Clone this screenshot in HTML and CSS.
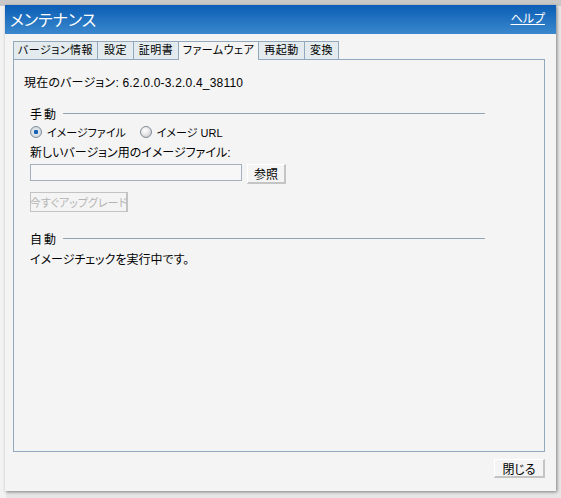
FILE: index.html
```html
<!DOCTYPE html>
<html lang="ja">
<head>
<meta charset="utf-8">
<title>メンテナンス</title>
<link rel="stylesheet" href="styles.css">
</head>
<body>
<div class="page">
  <div class="page-top"></div>
  <div class="page-main"></div>
</div>
<div class="dialog">
  <div class="titlebar">
    <span class="title">メンテナンス</span>
    <a class="help" href="#">ヘルプ</a>
  </div>
  <div class="dialog-body">
    <div class="tabs">
      <div class="tab t1">バージョン情報</div>
      <div class="tab t2">設定</div>
      <div class="tab t3">証明書</div>
      <div class="tab t4 active">ファームウェア</div>
      <div class="tab t5">再起動</div>
      <div class="tab t6">変換</div>
    </div>
    <div class="panel">
      <div class="version">現在のバージョン: 6.2.0.0-3.2.0.4_38110</div>
      <div class="section">
        <div class="section-head"><span class="section-title">手動</span><span class="rule"></span></div>
        <div class="radios">
          <label class="radio-item"><span class="radio checked"></span>イメージファイル</label>
          <label class="radio-item second"><span class="radio"></span>イメージ URL</label>
        </div>
        <div class="field-label">新しいバージョン用のイメージファイル:</div>
        <div class="file-row">
          <span class="file-input"></span>
          <span class="btn browse">参照</span>
        </div>
        <span class="btn disabled">今すぐアップグレード</span>
        <div class="section-head auto"><span class="section-title">自動</span><span class="rule"></span></div>
        <div class="message">イメージチェックを実行中です。</div>
      </div>
    </div>
    <div class="footer">
      <span class="btn close">閉じる</span>
    </div>
  </div>
</div>
</body>
</html>
```

FILE: styles.css
```css
html, body {
  margin: 0;
  padding: 0;
}
body {
  width: 561px;
  height: 498px;
  overflow: hidden;
  background: #d8d8d8;
  font-family: "Liberation Sans", "Noto Sans CJK JP", sans-serif;
  font-size: 12px;
  color: #000;
  font-feature-settings: "palt";
}
.page {
  display: flex;
  flex-direction: column;
  height: 498px;
}
.page-top {
  height: 6px;
  background: #c8c8c8;
}
.page-main {
  flex: 1;
  background: linear-gradient(to right, #f2f2f2 0, #f2f2f2 6px, #e6e6e6 6px);
}
.dialog {
  position: absolute;
  left: 5px;
  top: 5px;
  width: 551px;
  height: 486px;
  background: #f4f4f4;
  box-shadow: 1px 1px 3px rgba(0, 0, 0, 0.45);
  display: flex;
  flex-direction: column;
}
.titlebar {
  height: 29px;
  flex: none;
  background: linear-gradient(#0a5db5, #3a88cd);
  display: flex;
  align-items: center;
  justify-content: space-between;
  padding: 0 11px 0 5px;
}
.title {
  color: #fff;
  font-size: 16px;
  margin-top: -1px;
}
.help {
  color: #fff;
  font-size: 12px;
  text-decoration: underline;
  margin-top: -4px;
}
.dialog-body {
  flex: 1;
  display: flex;
  flex-direction: column;
  padding: 7px 11px 0 8px;
}
.tabs {
  display: flex;
  height: 18px;
  flex: none;
}
.tab {
  box-sizing: border-box;
  height: 18px;
  border: 1px solid #92a8bc;
  border-bottom: none;
  border-right: none;
  background: #e3ebee;
  font-size: 11px;
  line-height: 17px;
  text-align: center;
  letter-spacing: 0.5px;
  white-space: nowrap;
}
.tab.t1 { width: 84px; }
.tab.t2 { width: 36px; }
.tab.t3 { width: 45px; }
.tab.t4 { width: 80px; }
.tab.t5 { width: 46px; }
.tab.t6 { width: 35px; border-right: 1px solid #92a8bc; }
.tab.active {
  background: #f4f4f4;
  height: 19px;
  position: relative;
  z-index: 1;
}
.panel {
  box-sizing: border-box;
  width: 532px;
  height: 393px;
  flex: none;
  border: 1px solid #92a8bc;
  padding: 15px 10px 0 10px;
}
.version {
  line-height: 16px;
  font-size: 12px;
  letter-spacing: 0.2px;
}
.section {
  width: 455px;
  margin: 0 0 0 6px;
  padding-top: 14px;
}
.section-head {
  display: flex;
  align-items: center;
  height: 16px;
}
.section-title {
  letter-spacing: 2px;
  margin-right: 5px;
}
.rule {
  flex: 1;
  height: 0;
  border-top: 1px solid #8fa5b8;
  margin-top: 1px;
}
.radios {
  display: flex;
  align-items: center;
  margin-top: 2px;
  height: 18px;
}
.radio-item {
  display: flex;
  align-items: center;
  font-size: 11px;
}
.radio-item.second {
  margin-left: 14px;
}
.radio {
  box-sizing: border-box;
  width: 12px;
  height: 12px;
  border-radius: 50%;
  border: 1px solid #7f8c99;
  background: radial-gradient(circle at 40% 35%, #ffffff 0, #e8e8e8 45%, #bcbcbc 100%);
  margin-right: 5px;
}
.radio.checked {
  background: radial-gradient(circle at 50% 50%, #1a6cc4 0, #0e5aa8 28%, #dfe6ec 34%, #c6ccd2 100%);
}
.field-label {
  margin-top: 4px;
  line-height: 16px;
}
.file-row {
  display: flex;
  align-items: flex-start;
  margin-top: 3px;
}
.file-input {
  box-sizing: border-box;
  width: 212px;
  height: 17px;
  border: 1px solid #a3b1bf;
  background: #f7f7f7;
}
.btn {
  box-sizing: border-box;
  display: inline-flex;
  align-items: center;
  justify-content: center;
  background: #f4f4f4;
  border-top: 1px solid #ffffff;
  border-left: 1px solid #ffffff;
  border-right: 2px solid #c4c4c4;
  border-bottom: 2px solid #c4c4c4;
  font-size: 12px;
  white-space: nowrap;
}
.browse {
  width: 39px;
  height: 20px;
  margin-left: 5px;
}
.disabled {
  width: 98px;
  height: 20px;
  margin-top: 8px;
  border: 1px solid #c3c3c3;
  border-right-width: 2px;
  color: #b4b4b4;
  font-size: 11px;
}
.section-head.auto {
  margin-top: 18px;
}
.message {
  margin-top: 6px;
  line-height: 16px;
}
.footer {
  display: flex;
  justify-content: flex-end;
  padding-top: 7px;
}
.close {
  width: 51px;
  height: 19px;
}
```
